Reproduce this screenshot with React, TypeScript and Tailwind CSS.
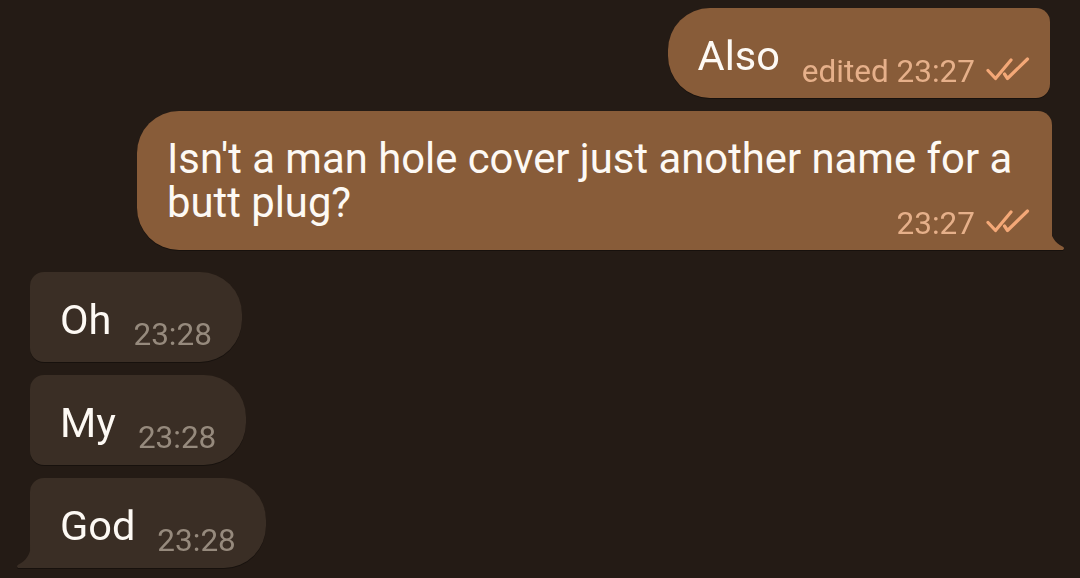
import React from "react";

const font = { fontFamily: "Roboto, 'Noto Sans', sans-serif" };

function Checks() {
  return (
    <svg width="44" height="24" viewBox="0 0 44 24" className="mb-[7px] ml-[11px] shrink-0" fill="none" stroke="#f4a877" strokeWidth="3.2" strokeLinecap="round" strokeLinejoin="round">
      <path d="M2 13.5 L9.5 21.5 L25 3" />
      <path d="M18.5 17 L21.5 21.5 L41.5 2" />
    </svg>
  );
}

function OutTail() {
  return (
    <svg width="16" height="23" viewBox="0 0 16 23" className="absolute right-[-14px] bottom-0">
      <path d="M0 0 C0.5 9 5 16 12.5 19.5 C14.8 20.6 14.3 23 12 23 L0 23 Z" fill="#885c39" />
    </svg>
  );
}

function InTail() {
  return (
    <svg width="16" height="23" viewBox="0 0 16 23" className="absolute left-[-15px] bottom-0">
      <path d="M16 0 C15.5 9 11 16 3.5 19.5 C1.2 20.6 1.7 23 4 23 L16 23 Z" fill="#3a2e25" />
    </svg>
  );
}

function Incoming({ text, tail }: { text: string; tail?: boolean }) {
  return (
    <div className="relative self-start drop-shadow-[0_1.5px_0.5px_rgba(0,0,0,0.35)]">
      <div
        className={`flex items-end bg-[#3a2e25] pl-[30px] pr-[30px] pt-[26px] pb-[20px] rounded-tl-[14px] rounded-tr-[42px] rounded-br-[42px] ${tail ? "rounded-bl-none" : "rounded-bl-[14px]"}`}
      >
        <span className="text-[41.5px] leading-[44px] text-[#fdf9f4]">{text}</span>
        <span className="relative top-[9px] ml-[22px] text-[31.5px] leading-[32px] text-[#968a7d]">23:28</span>
      </div>
      {tail && <InTail />}
    </div>
  );
}

export default function App() {
  return (
    <div className="w-[1080px] h-[578px] overflow-hidden bg-[#241b15] flex flex-col pt-[8px] pl-[30px] pr-[28px]" style={font}>
      <div className="self-end mr-[2px] drop-shadow-[0_1.5px_0.5px_rgba(0,0,0,0.35)]">
        <div className="flex items-end bg-[#885c39] pl-[30px] pr-[20px] pt-[26px] pb-[20px] rounded-l-[42px] rounded-r-[14px]">
          <span className="text-[41.5px] leading-[44px] text-[#fdf9f4]">Also</span>
          <div className="relative top-[10px] ml-[22px] flex items-end">
            <span className="text-[31.5px] leading-[32px] text-[#e6b08a] whitespace-nowrap">edited 23:27</span>
            <Checks />
          </div>
        </div>
      </div>

      <div className="relative self-end mt-[13px] drop-shadow-[0_1.5px_0.5px_rgba(0,0,0,0.35)]">
        <div className="relative w-[915px] bg-[#885c39] pl-[30px] pr-[20px] pt-[26px] pb-[25px] rounded-l-[42px] rounded-tr-[14px]">
          <div className="text-[41.8px] leading-[44px] text-[#fdf9f4] whitespace-nowrap">
            Isn't a man hole cover just another name for a
            <br />
            butt plug?
          </div>
          <div className="absolute right-[22px] bottom-[10px] flex items-end">
            <span className="text-[31.5px] leading-[32px] text-[#e6b08a]">23:27</span>
            <Checks />
          </div>
        </div>
        <OutTail />
      </div>

      <div className="mt-[22px] flex flex-col gap-[13px]">
        <Incoming text="Oh" />
        <Incoming text="My" />
        <Incoming text="God" tail />
      </div>
    </div>
  );
}
